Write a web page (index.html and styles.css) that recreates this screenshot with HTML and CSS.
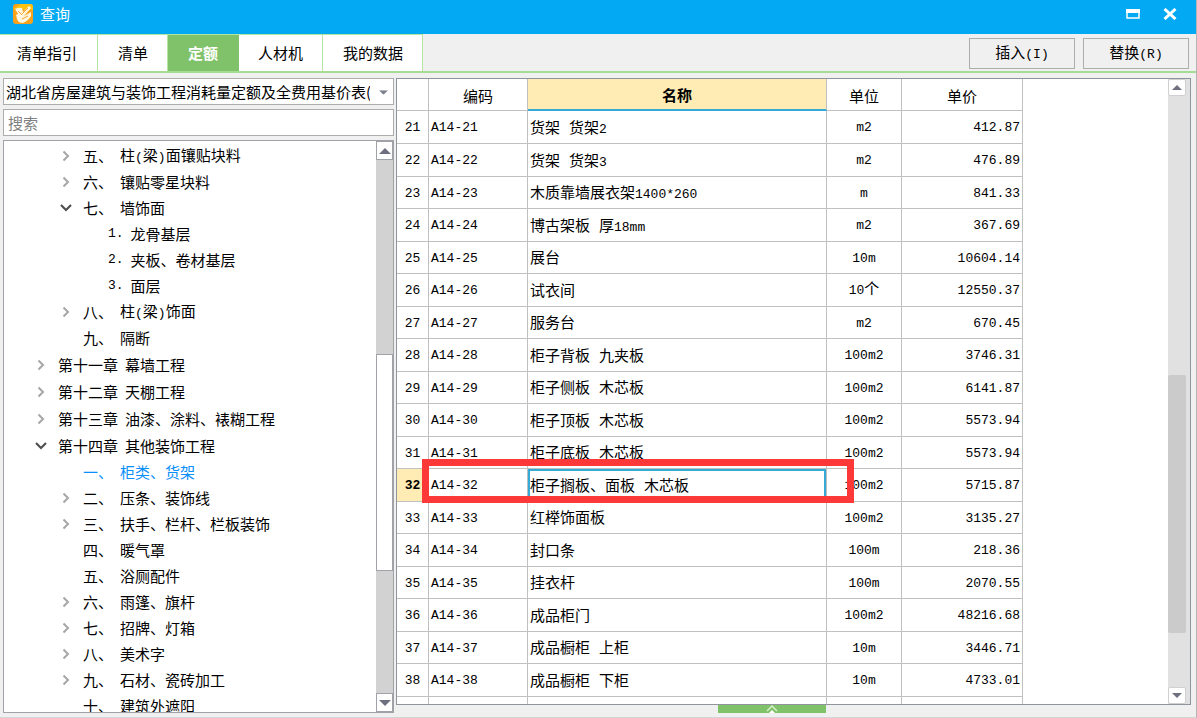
FILE: index.html
```html
<!DOCTYPE html>
<html lang="zh-CN">
<head>
<meta charset="utf-8">
<title>查询</title>
<link rel="stylesheet" href="styles.css">
</head>
<body>
<svg class="defs" aria-hidden="true">
  <symbol id="closed" viewBox="0 0 12 12"><path d="M3.500 1.500 8 6l-4.500 4.500" fill="none" stroke="#a6a6a6" stroke-width="2"/></symbol>
  <symbol id="open" viewBox="0 0 12 12"><path d="M1 3 6 8 11 3" fill="none" stroke="#505050" stroke-width="2.200"/></symbol>
  <symbol id="up" viewBox="0 0 12 6"><path d="M0 6 6 0l6 6z"/></symbol>
  <symbol id="down" viewBox="0 0 12 6"><path d="M0 0h12L6 6z"/></symbol>
</svg>
<header class="titlebar">
  <svg class="logo" viewBox="0 0 20 20" aria-hidden="true">
    <rect width="20" height="20" rx="3" fill="#f9a11b"/>
    <path d="M0 5 8 0h9q3 0 3 3v3z" fill="#ffc20e"/>
    <path d="M2 5q4-2 7-1l1 4 6-6 2 2-7 8 7-4v4q-3 5-8 7-5 0-6-4l-1-4 2-1z" fill="#fff6df"/>
    <path d="m8 11 7-7M5 7l3 3M9 15l6-3" fill="none" stroke="#f6a52c" stroke-width="1"/>
  </svg>
  <h1 class="title">查询</h1>
  <button class="winbtn" aria-label="最大化"><svg width="14" height="10" viewBox="0 0 14 10"><path d="M1 1h12v8H1z" fill="none" stroke="#fff" stroke-width="1.500"/><path d="M0 0h14v4H0z" fill="#fff"/></svg></button>
  <button class="winbtn" aria-label="关闭"><svg width="14" height="12" viewBox="0 0 14 12"><path d="m1.500 1 11 10m0-10-11 10" stroke="#fff" stroke-width="3"/></svg></button>
</header>
<nav class="toolbar">
  <div class="tabs">
    <button class="tab">清单指引</button>
    <button class="tab">清单</button>
    <button class="tab active">定额</button>
    <button class="tab">人材机</button>
    <button class="tab">我的数据</button>
  </div>
  <div class="actions">
    <button class="action">插入<span class="n">(I)</span></button>
    <button class="action">替换<span class="n">(R)</span></button>
  </div>
</nav>
<main class="main">
  <aside class="side">
    <div class="combo">
      <select class="field" aria-label="定额库"><option>湖北省房屋建筑与装饰工程消耗量定额及全费用基价表(2018)</option></select>
      <svg class="combo-arrow" viewBox="0 0 12 6"><use href="#down"/></svg>
    </div>
    <input class="field search" type="text" placeholder="搜索" aria-label="搜索">
    <div class="tree">
      <ul class="rows">
        <li class="row l2"><svg class="tw"><use href="#closed"/></svg><span>五、</span><span>柱<span class="n">(</span>梁<span class="n">)</span>面镶贴块料</span></li>
        <li class="row l2"><svg class="tw"><use href="#closed"/></svg><span>六、</span><span>镶贴零星块料</span></li>
        <li class="row l2"><svg class="tw"><use href="#open"/></svg><span>七、</span><span>墙饰面</span></li>
        <li class="row l3"><svg class="tw"></svg><span class="n">1.</span><span>龙骨基层</span></li>
        <li class="row l3"><svg class="tw"></svg><span class="n">2.</span><span>夹板、卷材基层</span></li>
        <li class="row l3"><svg class="tw"></svg><span class="n">3.</span><span>面层</span></li>
        <li class="row l2"><svg class="tw"><use href="#closed"/></svg><span>八、</span><span>柱<span class="n">(</span>梁<span class="n">)</span>饰面</span></li>
        <li class="row l2"><svg class="tw"></svg><span>九、</span><span>隔断</span></li>
        <li class="row l1"><svg class="tw"><use href="#closed"/></svg><span>第十一章</span><span>幕墙工程</span></li>
        <li class="row l1"><svg class="tw"><use href="#closed"/></svg><span>第十二章</span><span>天棚工程</span></li>
        <li class="row l1"><svg class="tw"><use href="#closed"/></svg><span>第十三章</span><span>油漆、涂料、裱糊工程</span></li>
        <li class="row l1"><svg class="tw"><use href="#open"/></svg><span>第十四章</span><span>其他装饰工程</span></li>
        <li class="row l2 current"><svg class="tw"></svg><span>一、</span><span>柜类、货架</span></li>
        <li class="row l2"><svg class="tw"><use href="#closed"/></svg><span>二、</span><span>压条、装饰线</span></li>
        <li class="row l2"><svg class="tw"><use href="#closed"/></svg><span>三、</span><span>扶手、栏杆、栏板装饰</span></li>
        <li class="row l2"><svg class="tw"></svg><span>四、</span><span>暖气罩</span></li>
        <li class="row l2"><svg class="tw"></svg><span>五、</span><span>浴厕配件</span></li>
        <li class="row l2"><svg class="tw"><use href="#closed"/></svg><span>六、</span><span>雨篷、旗杆</span></li>
        <li class="row l2"><svg class="tw"><use href="#closed"/></svg><span>七、</span><span>招牌、灯箱</span></li>
        <li class="row l2"><svg class="tw"><use href="#closed"/></svg><span>八、</span><span>美术字</span></li>
        <li class="row l2"><svg class="tw"><use href="#closed"/></svg><span>九、</span><span>石材、瓷砖加工</span></li>
        <li class="row l2"><svg class="tw"></svg><span>十、</span><span>建筑外遮阳</span></li>
      </ul>
      <div class="sb sb-tree">
        <button class="sb-btn" aria-label="向上"><svg viewBox="0 0 12 6"><use href="#up"/></svg></button>
        <div class="sb-track"><div class="sb-thumb"></div></div>
        <button class="sb-btn" aria-label="向下"><svg viewBox="0 0 12 6"><use href="#down"/></svg></button>
      </div>
    </div>
  </aside>
  <section class="content">
    <div class="panel">
      <div class="sheet">
        <table class="grid">
          <colgroup><col class="c-no"><col class="c-code"><col class="c-name"><col class="c-unit"><col class="c-price"></colgroup>
          <thead><tr><th></th><th>编码</th><th class="sorted">名称</th><th>单位</th><th>单价</th></tr></thead>
          <tbody>
            <tr><th>21</th><td>A14-21</td><td>货架 货架<span class="n">2</span></td><td>m2</td><td>412.87</td></tr>
            <tr><th>22</th><td>A14-22</td><td>货架 货架<span class="n">3</span></td><td>m2</td><td>476.89</td></tr>
            <tr><th>23</th><td>A14-23</td><td>木质靠墙展衣架<span class="n">1400*260</span></td><td>m</td><td>841.33</td></tr>
            <tr><th>24</th><td>A14-24</td><td>博古架板 厚<span class="n">18mm</span></td><td>m2</td><td>367.69</td></tr>
            <tr><th>25</th><td>A14-25</td><td>展台</td><td>10m</td><td>10604.14</td></tr>
            <tr><th>26</th><td>A14-26</td><td>试衣间</td><td>10<span class="zh">个</span></td><td>12550.37</td></tr>
            <tr><th>27</th><td>A14-27</td><td>服务台</td><td>m2</td><td>670.45</td></tr>
            <tr><th>28</th><td>A14-28</td><td>柜子背板 九夹板</td><td>100m2</td><td>3746.31</td></tr>
            <tr><th>29</th><td>A14-29</td><td>柜子侧板 木芯板</td><td>100m2</td><td>6141.87</td></tr>
            <tr><th>30</th><td>A14-30</td><td>柜子顶板 木芯板</td><td>100m2</td><td>5573.94</td></tr>
            <tr><th>31</th><td>A14-31</td><td>柜子底板 木芯板</td><td>100m2</td><td>5573.94</td></tr>
            <tr class="selected"><th>32</th><td>A14-32<span class="mark"></span></td><td>柜子搁板、面板 木芯板</td><td>100m2</td><td>5715.87</td></tr>
            <tr><th>33</th><td>A14-33</td><td>红榉饰面板</td><td>100m2</td><td>3135.27</td></tr>
            <tr><th>34</th><td>A14-34</td><td>封口条</td><td>100m</td><td>218.36</td></tr>
            <tr><th>35</th><td>A14-35</td><td>挂衣杆</td><td>100m</td><td>2070.55</td></tr>
            <tr><th>36</th><td>A14-36</td><td>成品柜门</td><td>100m2</td><td>48216.68</td></tr>
            <tr><th>37</th><td>A14-37</td><td>成品橱柜 上柜</td><td>10m</td><td>3446.71</td></tr>
            <tr><th>38</th><td>A14-38</td><td>成品橱柜 下柜</td><td>10m</td><td>4733.01</td></tr>
            <tr><th></th><td></td><td></td><td></td><td></td></tr>
          </tbody>
        </table>
      </div>
      <div class="sb sb-sheet">
        <button class="sb-btn" aria-label="向上"><svg viewBox="0 0 12 6"><use href="#up"/></svg></button>
        <div class="sb-track"><div class="sb-thumb"></div></div>
        <button class="sb-btn" aria-label="向下"><svg viewBox="0 0 12 6"><use href="#down"/></svg></button>
      </div>
    </div>
    <button class="expander" aria-label="展开"><svg width="12" height="8" viewBox="0 0 12 8"><path d="M1 6 6 1l5 5" fill="none" stroke="#d5f0c8" stroke-width="1.500"/><path d="M3 8l3-3 3 3z" fill="#fff"/></svg></button>
  </section>
</main>
</body>
</html>
```
FILE: styles.css
```css
* { box-sizing: border-box; }

body {
  margin: 0;
  height: 100vh;
  display: flex;
  flex-direction: column;
  overflow: hidden;
  background: #f0f0f0;
  border-right: 1px solid #b4b4b4;
  border-bottom: 1px solid #d4d4d4;
  color: #000;
  font: 15px/20px "Noto Sans CJK SC", "Liberation Sans", sans-serif;
}

button, input, select { font: inherit; color: inherit; margin: 0; padding: 0; }
.defs { display: none; }
.n { font-family: "Liberation Mono", monospace; font-size: 13px; }
.zh { font-size: 15px; }

.titlebar {
  display: flex;
  align-items: center;
  height: 34px;
  flex: none;
  padding: 0 16px 6px 13px;
  background: #03a9f2;
  color: #fff;
}
.logo { width: 20px; height: 20px; }
.title { flex: 1; margin: 0 0 0 7px; font-size: 15px; line-height: 20px; font-weight: 400; }
.winbtn {
  display: flex;
  align-items: center;
  justify-content: center;
  width: 22px;
  height: 20px;
  margin-left: 15px;
  border: 0;
  background: none;
}
.winbtn:last-child { margin-right: -1px; }

.toolbar {
  display: flex;
  justify-content: space-between;
  flex: none;
  height: 39px;
  border-bottom: 2px solid #a6dc94;
}
.tabs { display: flex; border-top: 1px solid #b4e6a2; background: #fff; }
.tab {
  padding: 0 20px 0 17px;
  border: 0;
  border-right: 1px solid #b4e6a2;
  background: #fff;
}
.tab:nth-child(2) { padding: 0 19px 0 20px; }
.tab:nth-child(4) { padding: 0 19px; }
.tab:last-child { padding: 0 19px 0 20px; }
.tab.active {
  padding: 0 20px;
  background: #80c269;
  border-color: #80c269;
  color: #fff;
  font-weight: 700;
}
.actions { display: flex; gap: 8px; padding: 4px 7px 2px 0; }
.action { width: 106px; border: 1px solid #adadad; background: #f0f0f0; }

.main { flex: 1; min-height: 0; display: flex; gap: 2px; padding: 5px 5px 4px 3px; }

.side { flex: none; width: 391px; display: flex; flex-direction: column; gap: 4px; }
.combo { position: relative; height: 27px; flex: none; }
.field {
  display: block;
  width: 100%;
  height: 27px;
  flex: none;
  border: 1px solid #adadad;
  border-radius: 0;
  background: #fff;
  outline: 0;
}
select.field { appearance: none; padding: 0 23px 0 2px; overflow: hidden; }
.combo-arrow { position: absolute; right: 6px; top: 12px; width: 9px; height: 5px; fill: #7c7f8c; }
.search { padding: 0 4px; }
.search::placeholder { color: #808080; opacity: 1; }

.tree {
  flex: 1;
  min-height: 0;
  display: flex;
  border: 1px solid #a0a2a8;
  background: #fff;
}
.rows { flex: 1; margin: 0; padding: 2px 0 0; list-style: none; overflow: hidden; }
.row { display: flex; align-items: center; gap: 7px; height: 26px; white-space: nowrap; }
.l1 { height: 27px; padding-left: 31px; }
.l2 { padding-left: 56px; }
.l3 { padding-left: 81px; }
.tw { flex: none; width: 12px; height: 12px; margin-right: 4px; }
.current { color: #0a8ffb; }

.sb { flex: none; display: flex; flex-direction: column; }
.sb-btn {
  flex: none;
  display: flex;
  align-items: center;
  justify-content: center;
  background: #fff;
  fill: #6e7080;
}
.sb-track { flex: 1; display: flex; flex-direction: column; }
.sb-tree { width: 17px; background: #d2d2d2; }
.sb-tree .sb-btn { height: 19px; border: 1px solid #a0a2a8; }
.sb-tree .sb-btn svg { width: 12px; height: 6px; }
.sb-tree .sb-track::before { content: ""; flex: 195; }
.sb-tree .sb-track::after { content: ""; flex: 123; }
.sb-tree .sb-thumb { flex: 216; border: 1px solid #a0a2a8; background: #fff; }

.content { flex: 1; min-width: 0; display: flex; flex-direction: column; align-items: center; }
.panel {
  flex: 1;
  min-height: 0;
  align-self: stretch;
  display: flex;
  border: 1px solid #90959d;
  background: #fff;
}
.sheet { flex: 1; min-width: 0; overflow: hidden; }
.sb-sheet { width: 22px; padding-right: 4px; background: #e1e1e1; }
.sb-sheet .sb-btn { height: 17px; border: 1px solid #d0d0d0; border-radius: 2px; }
.sb-sheet .sb-btn svg { width: 10px; height: 5px; }
.sb-sheet .sb-track::before { content: ""; flex: 279; }
.sb-sheet .sb-track::after { content: ""; flex: 54; }
.sb-sheet .sb-thumb { flex: 257; border-radius: 2px; background: #cbcbcb; }

.grid { width: 626px; table-layout: fixed; border-collapse: separate; border-spacing: 0; }
.c-no { width: 32px; }
.c-code { width: 99px; }
.c-name { width: 299px; }
.c-unit { width: 75px; }
.c-price { width: 121px; }
.grid tr { height: 32px; }
.grid tbody tr:nth-child(even) { height: 33px; }
.grid tbody tr:first-child { height: 33px; }
.grid th, .grid td {
  padding: 2px 2px 0;
  border: 0 solid #c0c0c0;
  border-width: 0 1px 1px 0;
  text-align: left;
  font-weight: 400;
  white-space: nowrap;
}
.grid thead th { text-align: center; }
.grid thead .sorted { background: #ffecb4; border-bottom: 2px solid #36a9d4; font-weight: 700; }
.grid tbody { font-family: "Liberation Mono", "Noto Sans CJK SC", monospace; }
.grid tbody th { padding: 2px 0 0; text-align: center; font-size: 13px; }
.grid td:nth-child(2) { position: relative; font-size: 13px; }
.grid td:nth-child(3) { padding-top: 5px; }
.grid td:nth-child(4) { text-align: center; font-size: 13px; }
.grid td:nth-child(5) { text-align: right; font-size: 13px; }
.grid .selected th { background: #ffecb4; font-weight: 700; }
.grid .selected td:nth-child(3) { box-shadow: inset 0 0 0 2px #36a9d4; }

.mark {
  position: absolute;
  z-index: 1;
  left: -7px;
  top: -10px;
  width: 432px;
  height: 44px;
  border: 7px solid #fd3838;
  pointer-events: none;
}

.expander {
  flex: none;
  display: flex;
  justify-content: center;
  width: 108px;
  height: 8px;
  margin-right: 43px;
  border: 0;
  background: #80c269;
}
```
